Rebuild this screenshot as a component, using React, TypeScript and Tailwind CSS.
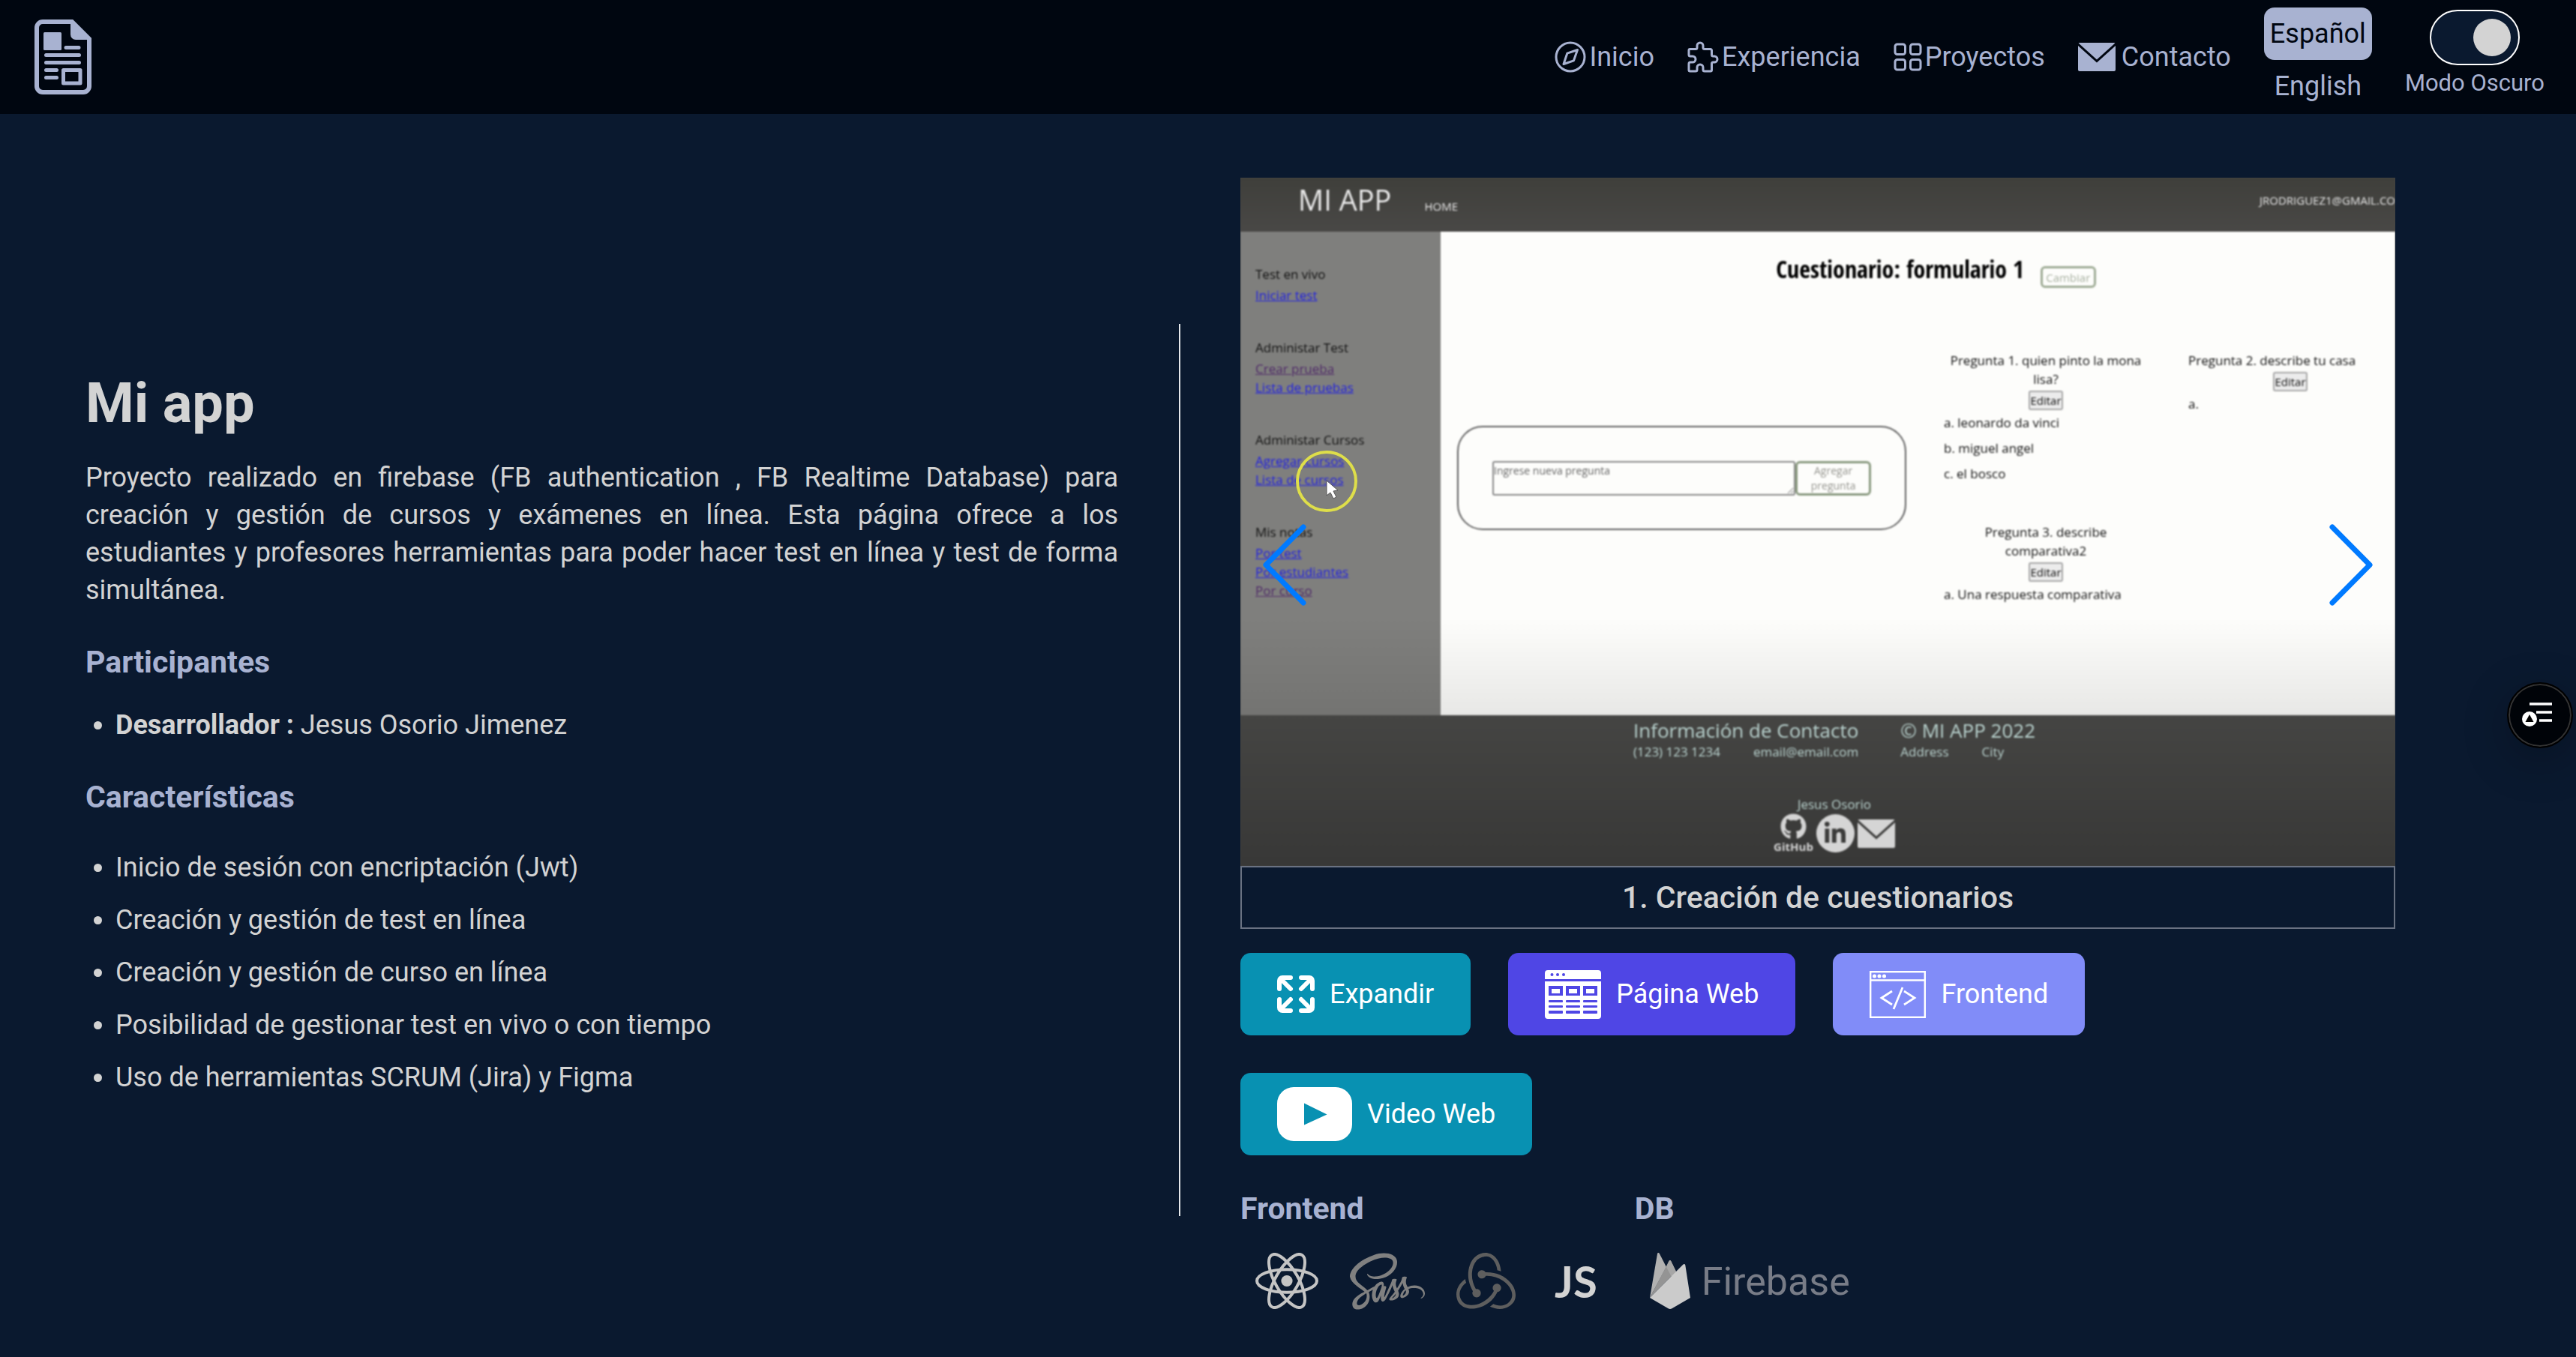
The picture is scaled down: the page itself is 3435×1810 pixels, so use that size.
import { useState, type ReactNode } from "react";
import { FaGithub, FaLinkedinIn, FaSass } from "react-icons/fa6";
import { SiRedux } from "react-icons/si";

function DocumentLogo() {
  return (
    <svg viewBox="0 0 76 100" className="h-[100px] w-[76px]" fill="none">
      <path d="M50 3H11a8 8 0 0 0-8 8v78a8 8 0 0 0 8 8h54a8 8 0 0 0 8-8V26Z" stroke="currentColor" strokeWidth="6" />
      <path d="M48 3v17a7 7 0 0 0 7 7h19Z" fill="currentColor" />
      <rect x="12" y="17" width="24" height="24" rx="1.5" fill="currentColor" />
      <path
        d="M42 37.500h17M15.500 47.500h44M15.500 57.500h44M15.500 67.500h14M15.500 77.500h14"
        stroke="currentColor"
        strokeWidth="5"
        strokeLinecap="round"
      />
      <rect x="38.500" y="67.500" width="22.500" height="17.500" stroke="currentColor" strokeWidth="5" strokeLinejoin="round" />
    </svg>
  );
}

function CompassIcon() {
  return (
    <svg viewBox="0 0 42 42" className="h-[42px] w-[42px]" fill="none" stroke="currentColor" strokeWidth="3" strokeLinejoin="round">
      <circle cx="21" cy="21" r="19" />
      <path d="M30.500 11.500 16.800 16.200 12 30.500 25.500 25.800Z" />
    </svg>
  );
}

function PuzzleIcon() {
  return (
    <svg viewBox="0 0 42 42" className="h-[42px] w-[42px]" fill="none" stroke="currentColor" strokeWidth="3" strokeLinejoin="round">
      <path d="M3.500 10.500H11a2 2 0 0 0 2-2V6a4 4 0 0 1 8 0v2.500a2 2 0 0 0 2 2h7.500a2 2 0 0 1 2 2V18a2 2 0 0 0 2 2H36a4 4 0 0 1 0 8h-1.500a2 2 0 0 0-2 2v8.500a1.500 1.500 0 0 1-1.500 1.500H23a2 2 0 0 1-2-2V35a4 4 0 0 0-8 0v3a2 2 0 0 1-2 2H3.500A1.500 1.500 0 0 1 2 38.500V30a2 2 0 0 1 2-2h3a4 4 0 0 0 0-8H4a2 2 0 0 1-2-2v-6a1.500 1.500 0 0 1 1.500-1.500Z" />
    </svg>
  );
}

function GridIcon() {
  return (
    <svg viewBox="0 0 38 38" className="h-[38px] w-[38px]" fill="none" stroke="currentColor" strokeWidth="3">
      <rect x="2" y="2" width="13.500" height="13.500" rx="3" />
      <rect x="22.500" y="2" width="13.500" height="13.500" rx="3" />
      <rect x="2" y="22.500" width="13.500" height="13.500" rx="3" />
      <rect x="22.500" y="22.500" width="13.500" height="13.500" rx="3" />
    </svg>
  );
}

function MailIcon({ className }: { className: string }) {
  return (
    <svg viewBox="0 0 50 38" className={className} fill="currentColor">
      <path d="M2 0h46a2 2 0 0 1 1.400.6L25 22.500.6.600A2 2 0 0 1 2 0Z" />
      <path d="M0 4v32a2 2 0 0 0 2 2h46a2 2 0 0 0 2-2V4L25 26.500Z" />
    </svg>
  );
}

function ExpandIcon() {
  return (
    <svg viewBox="0 0 50 50" className="h-[50px] w-[50px]" fill="none" stroke="currentColor" strokeWidth="6" strokeLinecap="round" strokeLinejoin="round">
      <path d="M18 3H7a4 4 0 0 0-4 4v11M5 5l13 13" />
      <path d="M32 3h11a4 4 0 0 1 4 4v11M45 5 32 18" />
      <path d="M18 47H7a4 4 0 0 1-4-4V32M5 45l13-13" />
      <path d="M32 47h11a4 4 0 0 0 4-4V32M45 45 32 32" />
    </svg>
  );
}

function WebPageIcon() {
  return (
    <svg viewBox="0 0 75 65" className="h-[65px] w-[75px]">
      <path d="M4 0h67a4 4 0 0 1 4 4v8H0V4a4 4 0 0 1 4-4ZM0 15h75v46a4 4 0 0 1-4 4H4a4 4 0 0 1-4-4Z" fill="#fff" />
      <g fill="#4f46e5">
        <circle cx="9.500" cy="6" r="2" />
        <circle cx="17" cy="6" r="2" />
        <circle cx="25" cy="6" r="2" />
        {[5, 28, 51].map((x) => (
          <g key={x}>
            <path d={`M${x} 21h19v13h-19ZM${x + 4} 25v6h11v-6Z`} fillRule="evenodd" />
            <rect x={x} y="40" width="19" height="3" rx="1" />
            <rect x={x} y="47" width="19" height="3" rx="1" />
            <rect x={x} y="54" width="19" height="4" rx="1" />
          </g>
        ))}
      </g>
    </svg>
  );
}

function CodeWindowIcon() {
  return (
    <svg viewBox="0 0 75 63" className="h-[63px] w-[75px]" fill="none" stroke="#fff" strokeWidth="2.400">
      <rect x="1.200" y="1.200" width="72.600" height="60.600" />
      <path d="M1 12.500h73" />
      <path d="m30 27-14 9 14 9M46 27l14 9-14 9M44 22 32 51" strokeWidth="2.800" />
      <g fill="#fff" stroke="none">
        <circle cx="6.500" cy="7" r="2.500" />
        <circle cx="13" cy="7" r="2.500" />
        <circle cx="19.500" cy="7" r="2.500" />
      </g>
    </svg>
  );
}

function PlayIcon() {
  return (
    <svg viewBox="0 0 100 72" className="h-[72px] w-[100px]">
      <path
        fill="#fff"
        fillRule="evenodd"
        d="M22 0h56a22 22 0 0 1 22 22v28a22 22 0 0 1-22 22H22A22 22 0 0 1 0 50V22A22 22 0 0 1 22 0ZM36 21.500v29L66.500 36.500Z"
      />
    </svg>
  );
}

function ReactLogo() {
  return (
    <svg viewBox="-42 -37.500 84 75" className="h-[75px] w-[84px]" fill="none" stroke="#c4c4c4" strokeWidth="4">
      <title>React</title>
      <circle r="7.600" fill="#c4c4c4" stroke="none" />
      <ellipse rx="40" ry="15.300" />
      <ellipse rx="40" ry="15.300" transform="rotate(60)" />
      <ellipse rx="40" ry="15.300" transform="rotate(120)" />
    </svg>
  );
}

function FirebaseLogo() {
  return (
    <svg viewBox="0 0 54 75" className="h-[75px] w-[54px]">
      <path d="M0 60 10 1.500C10.400-.4 12-.4 12.800 1L22 19 0 60Z" fill="#b1b1b1" />
      <path d="M0 60 25.500 11c.7-1.300 2-1.300 2.700 0L35 25Z" fill="#949494" />
      <path d="M22 19 25.500 11c.7-1.300 2-1.300 2.700 0L35 25 30 34Z" fill="#a6a6a6" />
      <path d="M0 60 44.500 15.500c1-1 2.600-.6 2.800 1L54 60 29.500 74.200c-1.600 1-3.500 1-5 0Z" fill="#cbcbcb" />
    </svg>
  );
}

function AccessibilityIcon() {
  return (
    <svg viewBox="0 0 42 34" className="h-[34px] w-[42px]">
      <path d="M11 2h30M20 13h21M24 24h17" stroke="#fff" strokeWidth="3.500" />
      <circle cx="11" cy="22" r="10" fill="#fff" />
      <path d="m11 16 5.500 10h-11Z" fill="#000" />
    </svg>
  );
}

function NavLink({ icon, children, gap = "gap-1" }: { icon: ReactNode; children: ReactNode; gap?: string }) {
  return (
    <a href="#" className={`flex items-center ${gap}`}>
      {icon}
      {children}
    </a>
  );
}

function Navbar() {
  const [dark, setDark] = useState(true);
  return (
    <header className="flex h-[152px] items-center justify-between bg-[#000610] pr-[42px] pl-[46px] text-[#a8b2d1]">
      <a href="#" aria-label="Portafolio" className="block">
        <DocumentLogo />
      </a>
      <nav className="flex items-center gap-[44px] text-[36px] leading-[48px]">
        <NavLink icon={<CompassIcon />}>Inicio</NavLink>
        <NavLink icon={<PuzzleIcon />}>Experiencia</NavLink>
        <NavLink icon={<GridIcon />}>Proyectos</NavLink>
        <NavLink icon={<MailIcon className="h-[38px] w-[50px]" />} gap="gap-2">
          Contacto
        </NavLink>
        <div className="flex flex-col pt-2">
          <button type="button" className="h-[70px] rounded-[14px] bg-[#a8b2d1] px-2 text-[#000610]">
            Español
          </button>
          <button type="button" className="h-[70px]">
            English
          </button>
        </div>
        <label className="flex flex-col items-center pb-1 text-[31px]">
          <input type="checkbox" role="switch" className="peer sr-only" checked={dark} onChange={(e) => setDark(e.target.checked)} />
          <span className="flex h-[74px] w-[120px] items-center rounded-full border-2 border-white bg-[#0a192f] px-[10px] peer-checked:justify-end">
            <span className="size-[50px] rounded-full bg-[#d3d3d3]" />
          </span>
          Modo Oscuro
        </label>
      </nav>
    </header>
  );
}

function ProjectInfo() {
  const features = [
    "Inicio de sesión con encriptación (Jwt)",
    "Creación y gestión de test en línea",
    "Creación y gestión de curso en línea",
    "Posibilidad de gestionar test en vivo o con tiempo",
    "Uso de herramientas SCRUM (Jira) y Figma",
  ];
  return (
    <section className="mt-[195px] border-r-2 border-gray-200 pt-[66px] pr-[81px] pb-[160px] pl-[114px] text-[36px] leading-[50px]">
      <h1 className="text-[74px] leading-[80px] font-bold">Mi app</h1>
      <p className="mt-[34px] text-justify">
        Proyecto realizado en firebase (FB authentication , FB Realtime Database) para creación y gestión de cursos y
        exámenes en línea. Esta página ofrece a los estudiantes y profesores herramientas para poder hacer test en línea y
        test de forma simultánea.
      </p>
      <h2 className="mt-[47px] text-[41px] leading-[48px] font-bold text-[#a8b2d1]">Participantes</h2>
      <ul className="mt-[35px]">
        <li className="flex items-center gap-[18px] pl-[11px]">
          <span className="size-[11px] rounded-full bg-[#d3d3d3]" />
          <span>
            <strong>Desarrollador :</strong> Jesus Osorio Jimenez
          </span>
        </li>
      </ul>
      <h2 className="mt-[47px] text-[41px] leading-[48px] font-bold text-[#a8b2d1]">Características</h2>
      <ul className="mt-[45px] flex flex-col gap-5">
        {features.map((f) => (
          <li key={f} className="flex items-center gap-[18px] pl-[11px]">
            <span className="size-[11px] rounded-full bg-[#d3d3d3]" />
            {f}
          </li>
        ))}
      </ul>
    </section>
  );
}

const menu = [
  { title: "Test en vivo", links: [["Iniciar test", false]] },
  { title: "Administar Test", links: [["Crear prueba", true], ["Lista de pruebas", false]] },
  { title: "Administar Cursos", links: [["Agregar cursos", false], ["Lista de cursos", false]] },
  { title: "Mis notas", links: [["Por test", false], ["Por estudiantes", false], ["Por curso", true]] },
] as const;

function Question({ title, answers, align }: { title: ReactNode; answers: string[]; align: string }) {
  return (
    <div>
      <p className={align}>{title}</p>
      <button
        type="button"
        className="mx-auto mt-[3px] block h-[26px] w-[46px] rounded-[3px] border-2 border-[#a8a8a8] bg-[#ececec] text-[15px] leading-[20px]"
      >
        Editar
      </button>
      <ul className="mt-1 flex flex-col gap-[9px]">
        {answers.map((a) => (
          <li key={a}>{a}</li>
        ))}
      </ul>
    </div>
  );
}

function AppSlide() {
  return (
    <div className="overflow-hidden bg-[#454543]">
      <div className="font-['Open_Sans','Noto_Sans',sans-serif] text-[17px] leading-[25px] text-[#111] blur-[1px]">
        <div className="flex h-[72px] items-start bg-linear-to-b from-[#3f3f3b] to-[#494846] text-[#e8e8e8]">
          <span className="pt-[6px] pl-[77px] text-[38px] leading-[46px]">MI APP</span>
          <span className="grow pt-[26px] pl-[44px] text-[15px]">HOME</span>
          <span className="pt-[18px] text-[15px] whitespace-nowrap">JRODRIGUEZ1@GMAIL.CO</span>
        </div>
        <div className="flex min-h-[645px]">
          <aside className="flex w-[267px] shrink-0 flex-col gap-[45px] bg-linear-to-b from-[#7f7f7d] from-80% to-[#747472] pt-[44px] pl-5">
            {menu.map((group) => (
              <div key={group.title}>
                <p className="mb-[3px]">{group.title}</p>
                {group.links.map(([text, visited]) => (
                  <a key={text} href="#" className={`block w-fit underline ${visited ? "text-[#4f2a68]" : "text-[#2020e0]"}`}>
                    {text}
                  </a>
                ))}
              </div>
            ))}
          </aside>
          <div className="grow bg-linear-to-b from-[#fdfdfb] from-80% to-[#e8e8e6] pt-[25px] pl-[22px]">
            <div className="flex items-end justify-center gap-[22px] pl-[26px]">
              <h2 className="font-['Open_Sans_Condensed','Roboto_Condensed','Open_Sans',sans-serif] text-[32px] leading-[50px] font-bold text-black">
                Cuestionario: formulario 1
              </h2>
              <button
                type="button"
                className="h-[29px] w-[74px] rounded-[6px] border-[3px] border-[#9fac96] text-[15px] leading-[22px] text-[#a9b2a2]"
              >
                Cambiar
              </button>
            </div>
            <div className="flex items-start gap-[50px]">
              <form className="mt-[184px] flex w-[599px] shrink-0 items-start rounded-[34px] border-2 border-[#606060] p-[45px] pb-[44px]">
                <textarea
                  aria-label="Nueva pregunta"
                  placeholder="Ingrese nueva pregunta"
                  className="h-[46px] w-[405px] resize rounded-[3px] border-2 border-[#8a8a8a] text-[14px] leading-[22px] placeholder:text-[#666]"
                />
                <button
                  type="button"
                  className="h-[46px] w-[101px] rounded-[6px] border-[3px] border-[#8a9a80] px-2 text-[14px] leading-[20px] text-[#969690]"
                >
                  Agregar pregunta
                </button>
              </form>
              <div className="mt-[84px] grid grid-cols-[272px_272px] gap-x-[54px] gap-y-[53px]">
                <Question
                  align="text-center"
                  title="Pregunta 1. quien pinto la mona lisa?"
                  answers={["a. leonardo da vinci", "b. miguel angel", "c. el bosco"]}
                />
                <Question align="text-left" title="Pregunta 2. describe tu casa" answers={["a."]} />
                <Question
                  align="px-9 text-center"
                  title="Pregunta 3. describe comparativa2"
                  answers={["a. Una respuesta comparativa"]}
                />
              </div>
            </div>
          </div>
        </div>
        <div className="flex h-[201px] flex-col items-center bg-linear-to-b from-[#454543] to-[#383837] pt-[3px] pl-[44px] leading-[24px] text-[#b9d2ce]">
          <div className="flex gap-[56px]">
            <div>
              <p className="text-[26px] leading-[34px]">Información de Contacto</p>
              <p className="flex justify-between">
                <span>(123) 123 1234</span>
                <span>email@email.com</span>
              </p>
            </div>
            <div>
              <p className="text-[26px] leading-[34px]">© MI APP 2022</p>
              <p className="flex gap-[44px]">
                <span>Address</span>
                <span>City</span>
              </p>
            </div>
          </div>
          <p className="mt-[46px]">Jesus Osorio</p>
          <div className="flex items-center gap-1 text-[#d5d5d5]">
            <a href="#" className="flex flex-col items-center text-[15px] leading-[18px] font-bold">
              <FaGithub className="size-[35px]" />
              GitHub
            </a>
            <a href="#" aria-label="LinkedIn" className="flex size-[51px] items-center justify-center rounded-full bg-[#d5d5d5]">
              <FaLinkedinIn className="size-[32px] text-[#3b3b3a]" />
            </a>
            <a href="#" aria-label="Correo">
              <MailIcon className="h-[38px] w-[50px]" />
            </a>
          </div>
        </div>
      </div>
    </div>
  );
}

function Carousel() {
  return (
    <div className="relative">
      <AppSlide />
      <svg viewBox="0 0 90 90" className="absolute top-[360px] left-[70px] size-[90px]">
        <circle cx="45" cy="45" r="39" fill="none" stroke="#dede4a" strokeWidth="4" />
        <path d="M45 44v20l5-4 4 8 4-2-4-8 6-1Z" fill="#fff" stroke="#555" strokeWidth="1" />
      </svg>
      <button type="button" aria-label="Anterior" className="absolute top-[460px] left-[27px]">
        <svg viewBox="0 0 64 112" className="h-[112px] w-[64px]" fill="none" stroke="#007aff" strokeWidth="7" strokeLinecap="round" strokeLinejoin="round">
          <path d="M57 6 7 56.500 57 107" />
        </svg>
      </button>
      <button type="button" aria-label="Siguiente" className="absolute top-[460px] right-[27px]">
        <svg viewBox="0 0 64 112" className="h-[112px] w-[64px]" fill="none" stroke="#007aff" strokeWidth="7" strokeLinecap="round" strokeLinejoin="round">
          <path d="m7 6 50 50.500L7 107" />
        </svg>
      </button>
    </div>
  );
}

function ActionButton({ icon, color, children }: { icon: ReactNode; color: string; children: ReactNode }) {
  return (
    <button type="button" className={`flex h-[110px] items-center gap-5 rounded-[14px] px-[49px] text-[36px] text-white ${color}`}>
      {icon}
      {children}
    </button>
  );
}

function Showcase() {
  return (
    <section className="pr-[241px] pl-[80px]">
      <Carousel />
      <p className="border-2 border-gray-500 text-center text-[41px] leading-[80px] font-medium">1. Creación de cuestionarios</p>
      <div className="mt-8 flex flex-wrap gap-[50px]">
        <ActionButton color="bg-[#0891b2]" icon={<ExpandIcon />}>
          Expandir
        </ActionButton>
        <ActionButton color="bg-[#4f46e5]" icon={<WebPageIcon />}>
          Página Web
        </ActionButton>
        <ActionButton color="bg-[#818cf8]" icon={<CodeWindowIcon />}>
          Frontend
        </ActionButton>
        <ActionButton color="bg-[#0891b2]" icon={<PlayIcon />}>
          Video Web
        </ActionButton>
      </div>
      <div className="mt-[47px] flex gap-[42px]">
        <div>
          <h3 className="text-[41px] leading-[48px] font-bold text-[#a8b2d1]">Frontend</h3>
          <div className="mt-[35px] flex h-[75px] items-center gap-[42px] pl-5">
            <ReactLogo />
            <FaSass title="Sass" className="h-[80px] w-[100px] text-[#808080]" />
            <SiRedux title="Redux" className="h-[79px] w-[79px] text-[#5e5e5e]" />
            <span className="pr-2 pl-[10px] font-['Lato',sans-serif] text-[58px] leading-none font-bold">JS</span>
          </div>
        </div>
        <div>
          <h3 className="text-[41px] leading-[48px] font-bold text-[#a8b2d1]">DB</h3>
          <div className="mt-[35px] flex h-[75px] items-center gap-[15px] pl-5">
            <FirebaseLogo />
            <span className="pt-[3px] text-[52px] leading-none text-[#787c87]">Firebase</span>
          </div>
        </div>
      </div>
    </section>
  );
}

export default function App() {
  return (
    <div className="min-h-screen bg-[#0a192f] font-['Roboto',sans-serif] text-[#d3d3d3]">
      <Navbar />
      <main className="grid grid-cols-[1574fr_1861fr] items-start pt-[85px]">
        <ProjectInfo />
        <Showcase />
      </main>
      <button
        type="button"
        aria-label="Accesibilidad"
        className="fixed top-[910px] right-1 flex size-[88px] items-center justify-center rounded-full border-2 border-black bg-[#000308] pr-2 shadow-[0_16px_60px_#00000040] ring-2 ring-[#333] ring-inset"
      >
        <AccessibilityIcon />
      </button>
    </div>
  );
}
